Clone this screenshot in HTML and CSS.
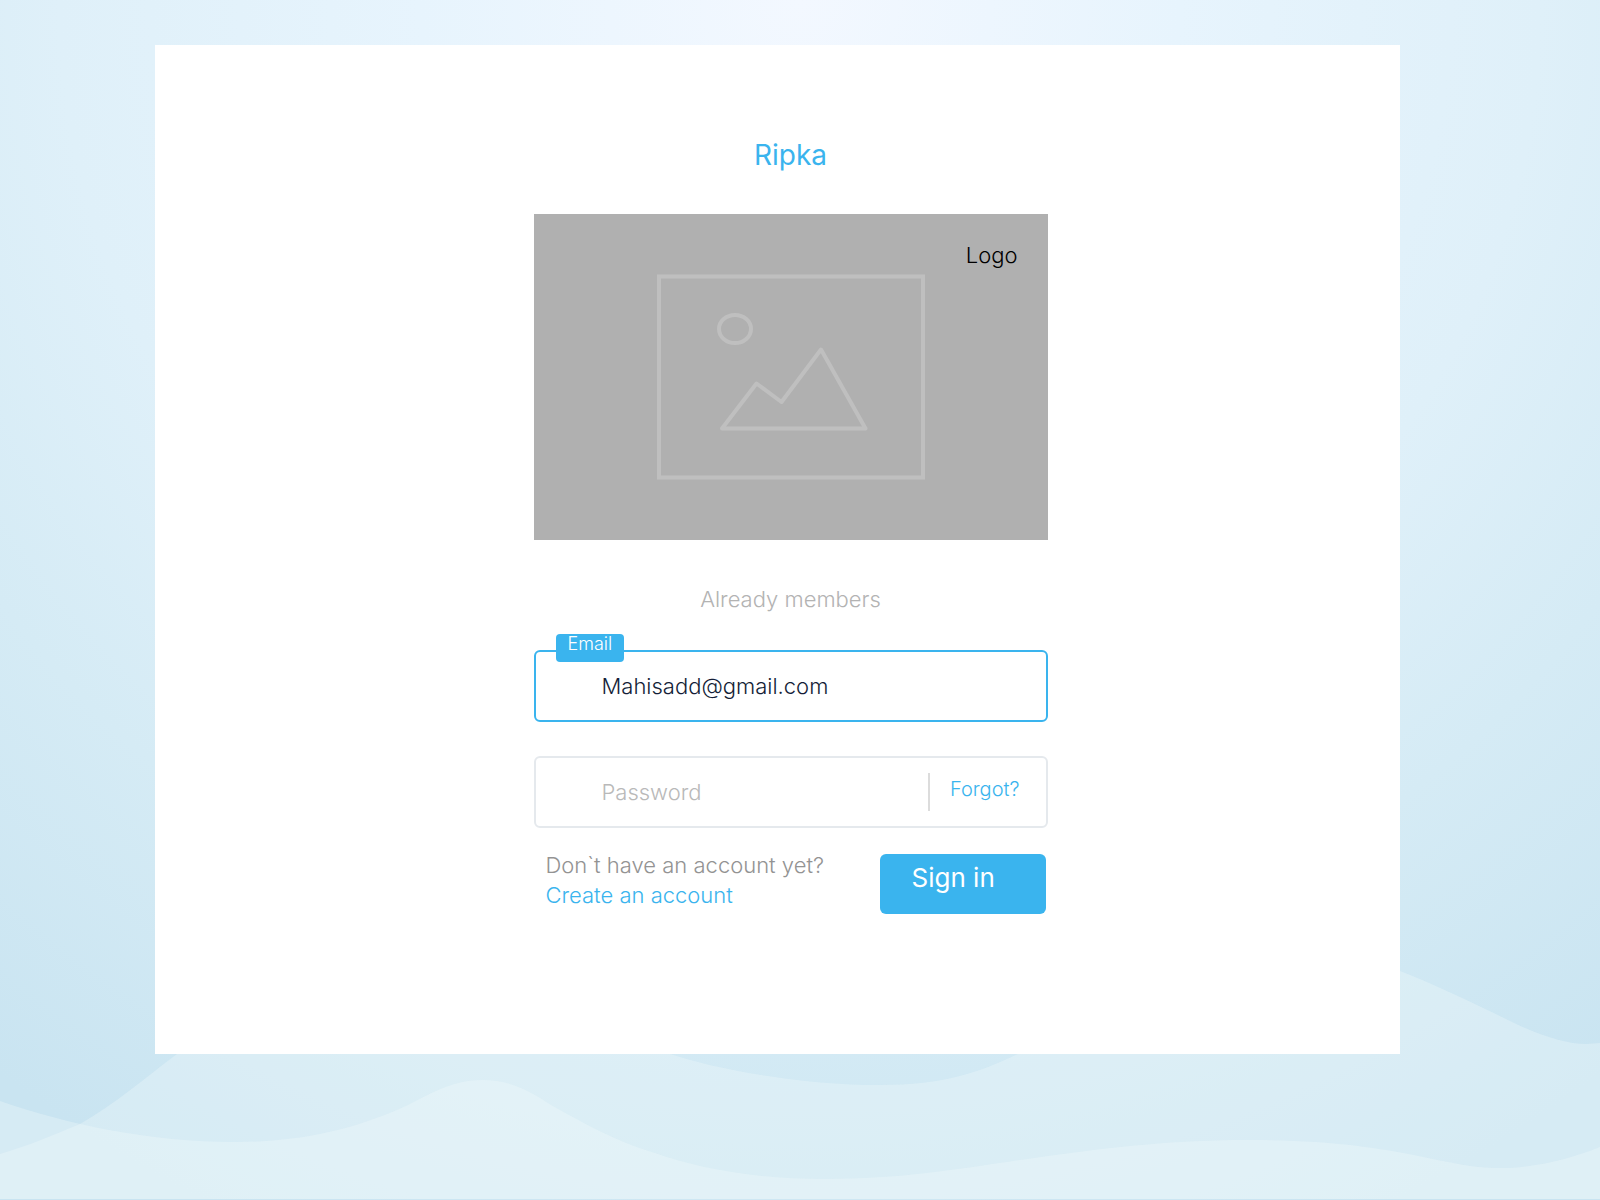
FILE: index.html
```html
<!DOCTYPE html>
<html lang="en">
<head>
<meta charset="utf-8">
<meta name="viewport" content="width=device-width, initial-scale=1">
<title>Ripka</title>
<link rel="stylesheet" href="styles.css">
</head>
<body>
<svg class="waves" viewBox="0 0 1600 240" preserveAspectRatio="none" aria-hidden="true">
  <path d="M0 194C28 186 56 174 80 164C115 144 145 118 177 94C250 30 330 10 420 10C520 10 590 68 670 94C715 109 800 125 880 125C945 125 980 112 1018 94C1090 50 1150 -60 1260 -60C1310 -60 1350 -18 1400 11C1436 25 1475 44 1508 60C1538 75 1566 84 1586 84L1600 83V239H0Z"/>
  <path d="M0 141C70 165 150 182 235 182C310 182 365 165 408 145C435 131 455 120 482 120C510 120 530 131 551 145C582 162 612 180 655 193C695 207 750 219 825 219C900 219 960 209 1020 200C1090 190 1160 180 1250 180C1400 180 1440 208 1500 208C1535 208 1570 199 1600 187V239H0Z"/>
</svg>
<main class="card">
  <form class="login">
    <h1 class="brand">Ripka</h1>
    <div class="picture">
      <svg class="picture-art" viewBox="0 0 514 326" aria-hidden="true">
        <path d="M125 62.500H389V263.500H125Z"/>
        <ellipse cx="201" cy="115" rx="16" ry="14"/>
        <path class="peaks" d="M188 214.500L222.500 169.500L247.500 188L287 135.500L331.500 214.500Z"/>
      </svg>
      <span class="picture-label">Logo</span>
    </div>
    <p class="intro">Already members</p>
    <div class="field field-active">
      <label class="tag" for="email">Email</label>
      <input class="input" id="email" type="email" value="Mahisadd@gmail.com">
    </div>
    <div class="field">
      <input class="input" type="password" placeholder="Password" aria-label="Password">
      <a class="forgot" href="#">Forgot?</a>
    </div>
    <div class="actions">
      <div class="signup">
        <span>Don`t have an account yet?</span>
        <a class="link" href="#">Create an account</a>
      </div>
      <button class="submit" type="submit">Sign in</button>
    </div>
  </form>
</main>
</body>
</html>
```
FILE: styles.css
```css
* {
  box-sizing: border-box;
}

body {
  margin: 0;
  min-height: 100vh;
  position: relative;
  display: flex;
  padding: 45px 200px 146px 155px;
  background: radial-gradient(circle at 50% 0, #f3f8ff 0, #e7f4fd 380px, #dff0f9 740px, #d5ebf5 1000px, #c9e4f1 1340px);
  font-family: Inter, "Open Sans", sans-serif;
  font-size: 22px;
  font-weight: 300;
  line-height: 30px;
}

.waves {
  position: absolute;
  left: 0;
  bottom: 0;
  width: 100%;
  height: 240px;
  overflow: visible;
  fill: #f6fcfb;
  fill-opacity: 0.3;
}

.card {
  position: relative;
  flex: 1;
  display: flex;
  justify-content: center;
  padding: 94px 0 94px 26px;
  background: #fff;
}

.login {
  width: 514px;
}

.brand {
  margin: 0 0 43px;
  color: #3ab4ee;
  font-size: 28px;
  font-weight: 400;
  line-height: 32px;
  text-align: center;
}

.picture {
  position: relative;
  background: #b0b0b0;
}

.picture-art {
  display: block;
  width: 100%;
  fill: none;
  stroke: #bfbfbf;
  stroke-width: 4;
}

.peaks {
  stroke-linejoin: round;
}

.picture-label {
  position: absolute;
  top: 26px;
  right: 30px;
  color: #000;
}

.intro {
  margin: 44px 0 36px;
  color: #b3b3b3;
  text-align: center;
}

.field {
  position: relative;
  display: flex;
  align-items: center;
  height: 72px;
  margin-bottom: 34px;
  border: 2px solid #e5e9ed;
  border-radius: 6px;
}

.field + .field {
  margin-bottom: 22px;
}

.field-active {
  border-color: #3ab4ee;
}

.tag {
  position: absolute;
  top: -18px;
  left: 20px;
  height: 28px;
  padding: 0 12px;
  border-radius: 4px;
  background: #3ab4ee;
  color: #fff;
  font-size: 18px;
  line-height: 20px;
}

.input {
  flex: 1;
  min-width: 0;
  height: 100%;
  padding: 0 0 0 66px;
  border: 0;
  outline: 0;
  background: none;
  color: #141e37;
  font: inherit;
}

.input::placeholder {
  color: #b9b9b9;
  opacity: 1;
}

.forgot {
  height: 38px;
  padding: 0 26px 0 20px;
  border-left: 2px solid #dcdcdc;
  color: #3ab4ee;
  font-size: 20px;
  line-height: 32px;
  text-decoration: none;
}

.actions {
  display: flex;
  justify-content: space-between;
  padding: 0 2px 0 12px;
}

.signup {
  display: flex;
  flex-direction: column;
  color: #939393;
}

.link {
  color: #3ab4ee;
  text-decoration: none;
}

.submit {
  width: 166px;
  height: 60px;
  margin-top: 4px;
  padding: 0 32px 12px;
  border: 0;
  border-radius: 6px;
  background: #3ab4ee;
  color: #fff;
  font: 400 26px/32px Inter, "Open Sans", sans-serif;
  text-align: left;
}
```
